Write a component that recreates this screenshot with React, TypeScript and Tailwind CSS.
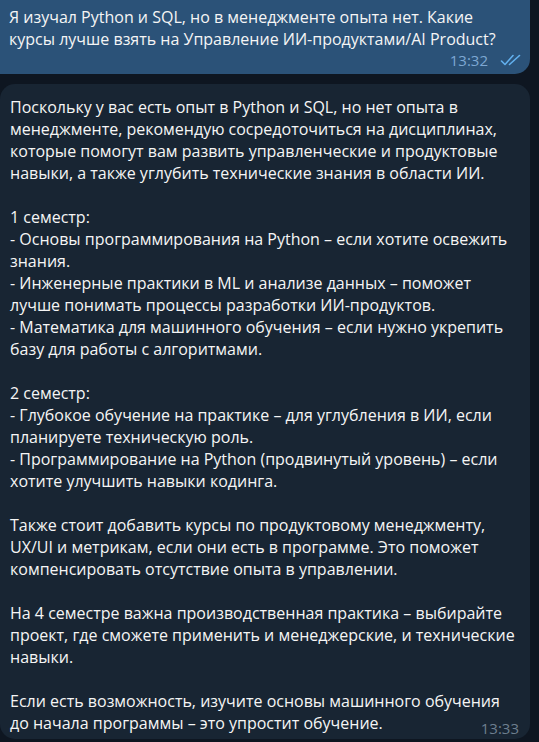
import React from "react";

const incoming: string[][] = [
  [
    "Поскольку у вас есть опыт в Python и SQL, но нет опыта в",
    "менеджменте, рекомендую сосредоточиться на дисциплинах,",
    "которые помогут вам развить управленческие и продуктовые",
    "навыки, а также углубить технические знания в области ИИ.",
  ],
  [
    "1 семестр:",
    "- Основы программирования на Python – если хотите освежить",
    "знания.",
    "- Инженерные практики в ML и анализе данных – поможет",
    "лучше понимать процессы разработки ИИ-продуктов.",
    "- Математика для машинного обучения – если нужно укрепить",
    "базу для работы с алгоритмами.",
  ],
  [
    "2 семестр:",
    "- Глубокое обучение на практике – для углубления в ИИ, если",
    "планируете техническую роль.",
    "- Программирование на Python (продвинутый уровень) – если",
    "хотите улучшить навыки кодинга.",
  ],
  [
    "Также стоит добавить курсы по продуктовому менеджменту,",
    "UX/UI и метрикам, если они есть в программе. Это поможет",
    "компенсировать отсутствие опыта в управлении.",
  ],
  [
    "На 4 семестре важна производственная практика – выбирайте",
    "проект, где сможете применить и менеджерские, и технические",
    "навыки.",
  ],
  [
    "Если есть возможность, изучите основы машинного обучения",
    "до начала программы – это упростит обучение.",
  ],
];

function DoubleCheck() {
  return (
    <svg width="21" height="12" viewBox="0 0 21 12" fill="none">
      <path d="M1.5 7 L5 10.5 L13 1.5" stroke="#62b0ee" strokeWidth="1.6" strokeLinecap="round" strokeLinejoin="round" />
      <path d="M9.5 10.5 L19.5 1.5" stroke="#62b0ee" strokeWidth="1.6" strokeLinecap="round" strokeLinejoin="round" />
    </svg>
  );
}

export default function App() {
  return (
    <div
      className="w-[539px] h-[742px] overflow-hidden bg-[#0e1621] text-[#f5f5f5]"
      style={{ fontFamily: '"Open Sans", "Noto Sans", sans-serif' }}
    >
      <div className="flex flex-col gap-[10px] pr-[9px]">
        <div className="-mt-[10px] rounded-br-[15px] bg-[#2b5278] pl-[9px] pr-[9px] pt-[16px] pb-[4px] text-[16px] leading-[22px]">
          <div className="whitespace-nowrap">Я изучал Python и SQL, но в менеджменте опыта нет. Какие</div>
          <div className="whitespace-nowrap">курсы лучше взять на Управление ИИ-продуктами/AI Product?</div>
          <div className="flex items-center justify-end gap-[12px] h-[20px]">
            <span className="text-[15px] leading-[20px] text-[#7da8d3]">13:32</span>
            <DoubleCheck />
          </div>
        </div>
        <div className="relative rounded-[15px] bg-[#182533] pl-[10px] pr-[12px] pt-[12px] pb-[5px] text-[16px] leading-[22px]">
          <div className="flex flex-col gap-[22px]">
            {incoming.map((para, i) => (
              <div key={i}>
                {para.map((line, j) => (
                  <div key={j} className="whitespace-nowrap">
                    {line}
                  </div>
                ))}
              </div>
            ))}
          </div>
          <span className="absolute right-[11px] bottom-[1px] text-[15px] leading-[20px] text-[#6d7f8f]">13:33</span>
        </div>
      </div>
    </div>
  );
}
